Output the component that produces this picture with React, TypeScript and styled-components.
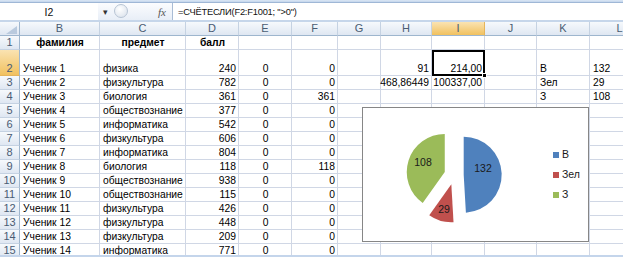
import * as React from 'react';
import styled, { createGlobalStyle } from 'styled-components';

const GlobalStyle = createGlobalStyle`
  html, body {
    margin: 0;
    padding: 0;
    background: #fff;
    overflow: hidden;
  }
  body {
    font-family: "Liberation Sans", Arial, sans-serif;
  }
`;

type Align = 'left' | 'right' | 'center';

const COL_WIDTHS = [20, 80, 86, 53, 53, 46, 43, 51, 53, 52, 53, 60];
const LETTERS = ['B', 'C', 'D', 'E', 'F', 'G', 'H', 'I', 'J', 'K', 'L'];
const ALIGN: Align[] = ['left', 'left', 'right', 'center', 'right', 'left', 'right', 'right', 'left', 'left', 'left'];
const SELECTED_COL = 7; // I
const SELECTED_ROW = 2;

const HEAD_ROW = ['фамилия', 'предмет', 'балл', '', '', '', '', '', '', '', ''];

const DATA: string[][] = [
  ['Ученик 1', 'физика', '240', '0', '0', '', '91', '214,00', '', 'В', '132'],
  ['Ученик 2', 'физкультура', '782', '0', '0', '', '468,86449', '100337,00', '', 'Зел', '29'],
  ['Ученик 3', 'биология', '361', '0', '361', '', '', '', '', 'З', '108'],
  ['Ученик 4', 'обществознание', '377', '0', '0', '', '', '', '', '', ''],
  ['Ученик 5', 'информатика', '542', '0', '0', '', '', '', '', '', ''],
  ['Ученик 6', 'физкультура', '606', '0', '0', '', '', '', '', '', ''],
  ['Ученик 7', 'информатика', '804', '0', '0', '', '', '', '', '', ''],
  ['Ученик 8', 'биология', '118', '0', '118', '', '', '', '', '', ''],
  ['Ученик 9', 'обществознание', '938', '0', '0', '', '', '', '', '', ''],
  ['Ученик 10', 'обществознание', '115', '0', '0', '', '', '', '', '', ''],
  ['Ученик 11', 'физкультура', '426', '0', '0', '', '', '', '', '', ''],
  ['Ученик 12', 'физкультура', '448', '0', '0', '', '', '', '', '', ''],
  ['Ученик 13', 'физкультура', '209', '0', '0', '', '', '', '', '', ''],
  ['Ученик 14', 'информатика', '771', '0', '0', '', '', '', '', '', ''],
];

const PIE = [
  { name: 'В', value: 132, color: '#4f81bd', lx: 120, ly: 64 },
  { name: 'Зел', value: 29, color: '#c0504d', lx: 81, ly: 105 },
  { name: 'З', value: 108, color: '#9bbb59', lx: 60, ly: 58 },
];

export default function App() {
  return (
    <>
      <GlobalStyle />
      <Window>
        <RibbonEdge />
        <FormulaBar>
          <NameBox>I2</NameBox>
          <DropArrow>▾</DropArrow>
          <RoundButton />
          <FxLabel>fx</FxLabel>
          <FormulaInput>=СЧЁТЕСЛИ(F2:F1001; "&gt;0")</FormulaInput>
        </FormulaBar>
        <BarGap />
        <SheetArea>
          <Sheet>
            <Corner>
              <svg width="20" height="14" viewBox="0 0 20 14">
                <polygon points="17,4 17,12 6,12" fill="#b9cade" />
              </svg>
            </Corner>
            {LETTERS.map((l, i) => (
              <ColHead key={l} $active={i === SELECTED_COL}>{l}</ColHead>
            ))}

            <RowHead $active={false}>1</RowHead>
            {HEAD_ROW.map((t, i) => (
              <Cell key={'h' + i} $align="center" $bold>{t}</Cell>
            ))}

            {DATA.map((row, r) => {
              const rowNum = r + 2;
              return (
                <React.Fragment key={rowNum}>
                  <RowHead $active={rowNum === SELECTED_ROW}>{rowNum}</RowHead>
                  {row.map((t, c) => (
                    <Cell
                      key={c}
                      $align={ALIGN[c]}
                      $selected={rowNum === SELECTED_ROW && c === SELECTED_COL}
                    >
                      {t}
                    </Cell>
                  ))}
                </React.Fragment>
              );
            })}
          </Sheet>
          <PieChart />
        </SheetArea>
        <BottomEdge />
      </Window>
    </>
  );
}

function slicePath(cx: number, cy: number, r: number, a0: number, a1: number, d: number) {
  const rad = (a: number) => (a * Math.PI) / 180;
  const mid = rad((a0 + a1) / 2);
  const x = cx + d * Math.sin(mid);
  const y = cy - d * Math.cos(mid);
  const x0 = x + r * Math.sin(rad(a0));
  const y0 = y - r * Math.cos(rad(a0));
  const x1 = x + r * Math.sin(rad(a1));
  const y1 = y - r * Math.cos(rad(a1));
  const large = a1 - a0 > 180 ? 1 : 0;
  return `M${x},${y} L${x0},${y0} A${r},${r} 0 ${large} 1 ${x1},${y1} Z`;
}

const PieChart: React.FC = () => {
  const total = PIE.reduce((s, p) => s + p.value, 0);
  let start = 0;
  return (
    <Chart>
      <svg width="190" height="133" viewBox="0 0 190 133">
        {PIE.map((p) => {
          const sweep = (p.value / total) * 360;
          const d = slicePath(91, 67, 38, start, start + sweep, 9.7);
          start += sweep;
          return <path key={p.name} d={d} fill={p.color} />;
        })}
        {PIE.map((p) => (
          <text
            key={'t' + p.name}
            x={p.lx}
            y={p.ly}
            textAnchor="middle"
            fontSize="10.5"
            fill="#1a1a1a"
            fontFamily='"Liberation Sans", Arial, sans-serif'
          >
            {p.value}
          </text>
        ))}
      </svg>
      <Legend>
        {PIE.map((p) => (
          <LegendItem key={p.name}>
            <Swatch $color={p.color} />
            {p.name}
          </LegendItem>
        ))}
      </Legend>
    </Chart>
  );
};

const Window = styled.div`
  width: 623px;
  height: 257px;
  display: flex;
  flex-direction: column;
  overflow: hidden;
  background: #fff;
`;

const RibbonEdge = styled.div`
  height: 3px;
  background: linear-gradient(#dbe7f5, #c3d5ec);
  border-bottom: 1px solid #9fb7d6;
  box-sizing: border-box;
`;

const FormulaBar = styled.div`
  height: 17px;
  display: flex;
  align-items: stretch;
  background: #fff;
  font-size: 10.5px;
  color: #111;
`;

const NameBox = styled.div`
  width: 98px;
  display: flex;
  align-items: center;
  justify-content: center;
  background: #fff;
`;

const DropArrow = styled.div`
  width: 14px;
  display: flex;
  align-items: center;
  justify-content: center;
  font-size: 9px;
  color: #333;
  background: linear-gradient(#fbfcfe, #e8eef7);
`;

const RoundButton = styled.div`
  width: 40px;
  background: linear-gradient(#fbfcfe, #e8eef7);
  position: relative;
  &::before {
    content: "";
    position: absolute;
    left: 2px;
    top: 1px;
    width: 14px;
    height: 14px;
    border-radius: 50%;
    border: 1px solid #b7c4d4;
    box-sizing: border-box;
    background: radial-gradient(circle at 40% 35%, #ffffff, #d7dfea);
  }
`;

const FxLabel = styled.div`
  width: 20px;
  display: flex;
  align-items: center;
  justify-content: center;
  font-family: "Liberation Serif", "Times New Roman", serif;
  font-style: italic;
  font-size: 11px;
  color: #555;
  background: linear-gradient(#fbfcfe, #e8eef7);
`;

const FormulaInput = styled.div`
  flex: 1;
  display: flex;
  align-items: center;
  padding-left: 5px;
  border-left: 1px solid #a9bcd5;
  white-space: nowrap;
  font-size: 9.3px;
  letter-spacing: -0.2px;
`;

const BarGap = styled.div`
  height: 2px;
  background: #c6d6ea;
`;

const SheetArea = styled.div`
  position: relative;
  height: 233px;
  overflow: hidden;
`;

const Sheet = styled.div`
  display: grid;
  grid-template-columns: ${COL_WIDTHS.map((w) => w + 'px').join(' ')};
  grid-template-rows: 14px 14px 26px repeat(13, 14px);
  width: max-content;
  font-size: 10.3px;
  line-height: 13px;
  color: #000;
`;

const headerBg = 'linear-gradient(#f6f9fc, #dfe7f2)';
const activeBg = 'linear-gradient(#fae3b2, #f1c15f)';

const Corner = styled.div`
  background: ${headerBg};
  border-right: 1px solid #9eb6ce;
  border-bottom: 1px solid #9eb6ce;
  box-sizing: border-box;
  svg {
    display: block;
  }
`;

const ColHead = styled.div<{ $active: boolean }>`
  background: ${({ $active }) => ($active ? activeBg : headerBg)};
  border-right: 1px solid ${({ $active }) => ($active ? '#e5b55c' : '#c5d2e2')};
  border-bottom: 1px solid #9eb6ce;
  box-sizing: border-box;
  display: flex;
  align-items: center;
  justify-content: center;
  color: #4a5c73;
  font-size: 11px;
`;

const RowHead = styled.div<{ $active: boolean }>`
  background: ${({ $active }) => ($active ? activeBg : headerBg)};
  border-right: 1px solid #9eb6ce;
  border-bottom: 1px solid ${({ $active }) => ($active ? '#e5b55c' : '#c5d2e2')};
  box-sizing: border-box;
  display: flex;
  align-items: flex-end;
  justify-content: center;
  color: #4a5c73;
  font-size: 11px;
`;

const Cell = styled.div<{ $align: Align; $bold?: boolean; $selected?: boolean }>`
  position: relative;
  border-right: 1px solid #d0d7e5;
  border-bottom: 1px solid #d0d7e5;
  box-sizing: border-box;
  display: flex;
  align-items: flex-end;
  justify-content: ${({ $align }) =>
    $align === 'left' ? 'flex-start' : $align === 'right' ? 'flex-end' : 'center'};
  padding: 0 2px 0 3px;
  white-space: nowrap;
  font-weight: ${({ $bold }) => ($bold ? 700 : 400)};
  ${({ $selected }) =>
    $selected
      ? `
    z-index: 2;
    outline: 2px solid #000;
    outline-offset: -2px;
    &::after {
      content: "";
      position: absolute;
      right: -3px;
      bottom: -3px;
      width: 5px;
      height: 5px;
      background: #000;
      border: 1px solid #fff;
      box-sizing: border-box;
    }
  `
      : ''}
`;

const Chart = styled.div`
  position: absolute;
  left: 362px;
  top: 85px;
  width: 227px;
  height: 135px;
  box-sizing: border-box;
  border: 1px solid #868686;
  background: #fff;
  display: flex;
  align-items: center;
  z-index: 3;
  svg {
    display: block;
  }
`;

const Legend = styled.div`
  display: flex;
  flex-direction: column;
  gap: 7px;
  font-size: 10.5px;
  line-height: 13px;
  color: #1a1a1a;
`;

const LegendItem = styled.div`
  display: flex;
  align-items: center;
  gap: 3px;
`;

const Swatch = styled.span<{ $color: string }>`
  width: 6px;
  height: 6px;
  background: ${({ $color }) => $color};
`;

const BottomEdge = styled.div`
  height: 2px;
  background: #c4d5eb;
`;
